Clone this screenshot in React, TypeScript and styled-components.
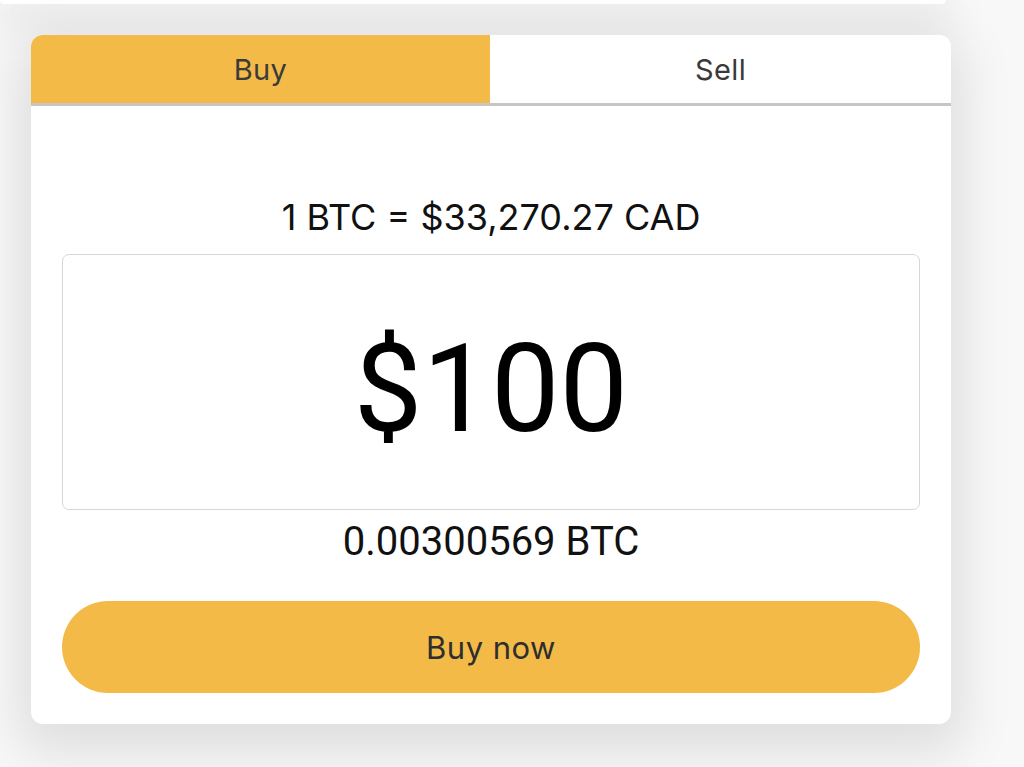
import React, { useState } from "react";
import styled, { createGlobalStyle } from "styled-components";

const GlobalStyle = createGlobalStyle`
  html, body {
    margin: 0;
    padding: 0;
    background: #f8f8f8;
    overflow: hidden;
  }
  * { box-sizing: border-box; }
`;

const Page = styled.div`
  width: 1024px;
  height: 767px;
  display: flex;
  flex-direction: column;
  align-items: flex-start;
  gap: 31px;
  background: #f8f8f8;
  overflow: hidden;
`;

const TopCard = styled.div`
  width: 946px;
  height: 4px;
  background: #ffffff;
  border-radius: 0 0 12px 12px;
  box-shadow: 0 10px 40px 8px rgba(0, 0, 0, 0.1);
`;

const Card = styled.section`
  margin-left: 31px;
  width: 920px;
  height: 689px;
  background: #ffffff;
  border-radius: 12px;
  overflow: hidden;
  display: flex;
  flex-direction: column;
  box-shadow: 0 16px 50px 14px rgba(0, 0, 0, 0.1);
`;

const Tabs = styled.div`
  display: grid;
  grid-template-columns: 459px 1fr;
  height: 72px;
  border-bottom: 3px solid #c6c6c6;
`;

const Tab = styled.button<{ $active: boolean }>`
  border: none;
  margin: 0;
  padding: 0;
  background: ${(p) => (p.$active ? "#f3ba47" : "#ffffff")};
  color: #3a3a3a;
  font-family: Inter, "Noto Sans", sans-serif;
  font-size: 29px;
  letter-spacing: 0.4px;
  font-weight: 400;
  cursor: pointer;
  display: flex;
  align-items: center;
  justify-content: center;
`;

const Body = styled.div`
  flex: 1;
  display: flex;
  flex-direction: column;
  align-items: stretch;
  padding: 92px 31px 31px;
`;

const Rate = styled.div`
  text-align: center;
  font-family: Inter, "Noto Sans", sans-serif;
  font-size: 36px;
  color: #111;
  line-height: 38px;
  height: 38px;
`;

const AmountBox = styled.div`
  margin-top: 18px;
  height: 256px;
  border: 1.5px solid #d6d6dc;
  border-radius: 7px;
  display: flex;
  align-items: center;
  justify-content: center;
  font-family: Roboto, "Liberation Sans", sans-serif;
  font-size: 122px;
  color: #000;
  line-height: 1;
  padding-top: 16px;
`;

const Converted = styled.div`
  margin-top: 13px;
  text-align: center;
  font-family: Roboto, "Liberation Sans", sans-serif;
  font-size: 40px;
  color: #111;
  line-height: 38px;
  height: 38px;
`;

const BuyButton = styled.button`
  margin-top: 40px;
  height: 92px;
  border: none;
  border-radius: 46px;
  background: #f3ba47;
  color: #2e2e2e;
  font-family: Inter, "Noto Sans", sans-serif;
  font-size: 31px;
  letter-spacing: 0.5px;
  cursor: pointer;
  display: flex;
  align-items: center;
  justify-content: center;
`;

export default function App() {
  const [mode, setMode] = useState<"buy" | "sell">("buy");
  return (
    <>
      <GlobalStyle />
      <Page>
        <TopCard />
        <Card>
          <Tabs>
            <Tab $active={mode === "buy"} onClick={() => setMode("buy")}>
              Buy
            </Tab>
            <Tab $active={mode === "sell"} onClick={() => setMode("sell")}>
              Sell
            </Tab>
          </Tabs>
          <Body>
            <Rate>1 BTC = $33,270.27 CAD</Rate>
            <AmountBox>$100</AmountBox>
            <Converted>0.00300569 BTC</Converted>
            <BuyButton>Buy now</BuyButton>
          </Body>
        </Card>
      </Page>
    </>
  );
}
